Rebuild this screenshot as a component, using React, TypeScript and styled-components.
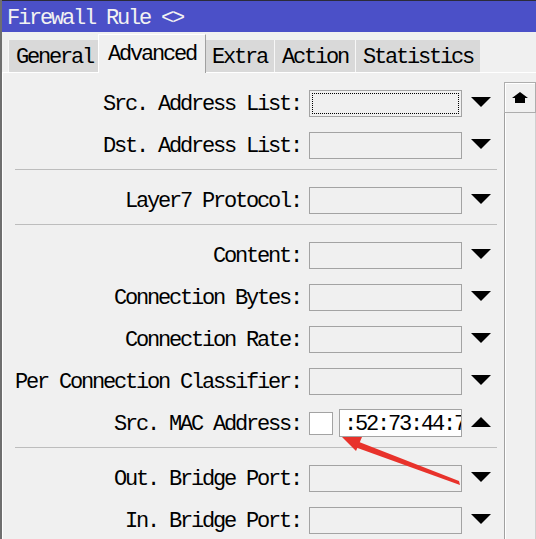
import React from "react";
import styled, { createGlobalStyle, css } from "styled-components";

const GlobalStyle = createGlobalStyle`
  html, body { margin: 0; padding: 0; background: #f0f0f0; overflow: hidden; }
  * { box-sizing: border-box; }
`;

const FONT = `"Liberation Mono", "DejaVu Sans Mono", monospace`;

const Window = styled.div`
  position: relative;
  width: 536px;
  height: 539px;
  display: flex;
  flex-direction: column;
  border-left: 2px solid #6f6f6f;
  background: #f0f0f0;
  overflow: hidden;
  font-family: ${FONT};
  font-size: 22px;
  letter-spacing: -2.2px;
  color: #000;
`;

const TitleBar = styled.div`
  height: 32px;
  flex: none;
  background: #4b50c8;
  border-top: 1px solid #2b2b3a;
  color: #f2f2f2;
  padding-left: 5px;
  display: flex;
  align-items: center;
  padding-top: 4px;
  white-space: pre;
`;

const TabBar = styled.div`
  height: 40px;
  flex: none;
  display: flex;
  align-items: flex-end;
  padding-left: 6px;
  position: relative;
  z-index: 2;
`;

const Tab = styled.div<{ $active?: boolean }>`
  height: 32px;
  padding: 2px 7px 0 7px;
  background: #d9d9d9;
  border-left: 1px solid #f7f7f7;
  display: flex;
  align-items: center;
  white-space: pre;
  ${(p) =>
    p.$active &&
    css`
      height: 39px;
      margin: 0 -2px -1px -2px;
      padding: 0 9px 0 9px;
      background: #f0f0f0;
      border-top: 1px solid #ffffff;
      border-left: 1px solid #ffffff;
      border-right: 1px solid #a0a0a0;
      position: relative;
      z-index: 3;
    `}
`;

const Panel = styled.div`
  flex: 1;
  display: flex;
  border-top: 1px solid #ffffff;
  border-left: 1px solid #ffffff;
  min-height: 0;
`;

const Form = styled.div`
  flex: 1;
  padding: 9px 7px 0 12px;
  display: flex;
  flex-direction: column;
`;

const Row = styled.div`
  height: 42px;
  flex: none;
  display: flex;
  align-items: center;
`;

const Label = styled.div`
  flex: 1;
  text-align: right;
  padding-right: 8px;
  padding-top: 2px;
  white-space: pre;
`;

const Field = styled.div<{ $focused?: boolean }>`
  position: relative;
  width: 153px;
  height: 27px;
  border: 1px solid #a3a3a3;
  background: #f0f0f0;
  ${(p) =>
    p.$focused &&
    css`
      &::after {
        content: "";
        position: absolute;
        inset: 2px;
        border: 1px dotted #000;
      }
    `}
`;

const CheckBox = styled.div`
  width: 24px;
  height: 23px;
  border: 1px solid #a3a3a3;
  background: #ffffff;
  margin-right: 6px;
`;

const MacInput = styled.div`
  width: 123px;
  height: 28px;
  border: 1px solid #a3a3a3;
  background: #ffffff;
  padding: 2px 0 0 4px;
  overflow: hidden;
  white-space: pre;
  display: flex;
  align-items: center;
`;

const ArrowCell = styled.div`
  width: 35px;
  display: flex;
  justify-content: flex-start;
  padding-left: 9px;
`;

const Triangle = styled.span<{ $up?: boolean }>`
  display: block;
  width: 0;
  height: 0;
  border-left: 10px solid transparent;
  border-right: 10px solid transparent;
  margin-top: -2px;
  ${(p) =>
    p.$up
      ? css`
          border-bottom: 10px solid #000;
        `
      : css`
          border-top: 10px solid #000;
        `}
`;

const Separator = styled.div`
  height: 1px;
  background: #bdbdbd;
  margin: 3px 0 9px 0;
  flex: none;
`;

const ScrollBar = styled.div`
  width: 32px;
  margin-top: 9px;
  display: flex;
  flex-direction: column;
`;

const ScrollButton = styled.div`
  height: 31px;
  border: 1px solid #adadad;
  box-shadow: inset 1px 1px 0 #ffffff;
  background: #f0f0f0;
  display: flex;
  align-items: center;
  justify-content: center;
`;

const ScrollTrack = styled.div`
  flex: 1;
  border-left: 1px solid #a0a0a0;
  border-right: 1px solid #d0d0d0;
  box-shadow: inset 1px 0 0 #ffffff;
  background: #f0f0f0;
`;

const Overlay = styled.svg`
  position: absolute;
  left: -2px;
  top: 0;
  pointer-events: none;
`;

type RowDef = { label: string; kind?: "focused" | "mac" } | "sep";

const rows: RowDef[] = [
  { label: "Src. Address List:", kind: "focused" },
  { label: "Dst. Address List:" },
  "sep",
  { label: "Layer7 Protocol:" },
  "sep",
  { label: "Content:" },
  { label: "Connection Bytes:" },
  { label: "Connection Rate:" },
  { label: "Per Connection Classifier:" },
  { label: "Src. MAC Address:", kind: "mac" },
  "sep",
  { label: "Out. Bridge Port:" },
  { label: "In. Bridge Port:" },
];

const tabs = ["General", "Advanced", "Extra", "Action", "Statistics"];

export default function App() {
  return (
    <>
      <GlobalStyle />
      <Window>
        <TitleBar>Firewall Rule &lt;&gt;</TitleBar>
        <TabBar>
          {tabs.map((t) => (
            <Tab key={t} $active={t === "Advanced"}>
              {t}
            </Tab>
          ))}
        </TabBar>
        <Panel>
          <Form>
            {rows.map((r, i) =>
              r === "sep" ? (
                <Separator key={i} />
              ) : (
                <Row key={i}>
                  <Label>{r.label}</Label>
                  {r.kind === "mac" ? (
                    <>
                      <CheckBox />
                      <MacInput>:52:73:44:7</MacInput>
                    </>
                  ) : (
                    <Field $focused={r.kind === "focused"} />
                  )}
                  <ArrowCell>
                    <Triangle $up={r.kind === "mac"} />
                  </ArrowCell>
                </Row>
              )
            )}
          </Form>
          <ScrollBar>
            <ScrollButton>
              <svg width="16" height="11" viewBox="0 0 16 11">
                <polygon points="8,0 16,6 13,6 13,11 3,11 3,6 0,6" fill="#000" />
              </svg>
            </ScrollButton>
            <ScrollTrack />
          </ScrollBar>
        </Panel>
        <Overlay width="536" height="539" viewBox="0 0 536 539">
          <polygon points="459,481 460,485 352,446 354,440" fill="#e8322b" />
          <polygon points="342,437 362,437 356,451" fill="#e8322b" />
        </Overlay>
      </Window>
    </>
  );
}
